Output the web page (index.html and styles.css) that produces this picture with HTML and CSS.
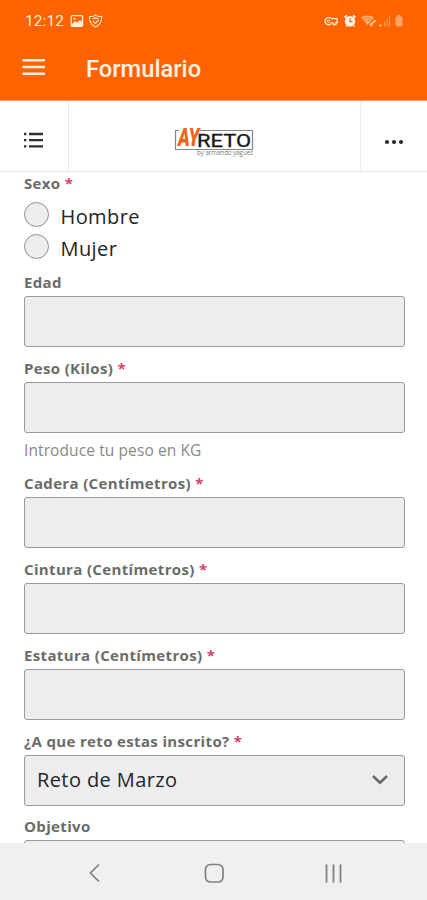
FILE: index.html
```html
<!DOCTYPE html>
<html lang="es">
<head>
<meta charset="utf-8">
<title>Formulario</title>
<link rel="stylesheet" href="styles.css">
</head>
<body>
<div class="screen">
  <header class="header">
    <div class="status">
      <span class="clock">12:12</span>
      <svg class="status-left" width="34" height="16" viewBox="0 0 34 16">
        <rect x="1.2" y="2.7" width="11.4" height="10.6" rx="1.2" fill="none" stroke="#fff0dc" stroke-width="1.3"/>
        <path d="M1.5 11.5 5 8l2 1.500L10 7l3 2.500V13H1.500z" fill="#fff0dc"/><circle cx="4.500" cy="5.700" r="1" fill="#fff0dc"/>
        <path d="M25.500 1.800l1.800 1.500 4.400.5c.2 5-1.600 8-6.200 10.200C20.900 11.800 19.200 8.800 19.400 3.800l4.300-.5z" fill="none" stroke="#ffe3c4" stroke-width="1.100"/>
        <path d="M22.500 5.800q3-1.300 6 0M22.800 8l2.500 2.500 3.400-3.500" fill="none" stroke="#ffe3c4" stroke-width="1.100"/>
      </svg>
      <svg class="status-right" width="82" height="16" viewBox="0 0 82 16">
        <path d="M4.500 4.700a3.500 3.500 0 1 0 3.200 5.100h1.500V11.500h2.800V9.500h1.200V5.700H7.700A3.500 3.500 0 0 0 4.500 4.700z" fill="none" stroke="#ffe8cf" stroke-width="1.300"/>
        <circle cx="4.500" cy="8.200" r="1.200" fill="none" stroke="#ffe8cf"/>
        <path d="M20.500 4.500l2.500-2.200M31.500 4.500l-2.500-2.200M22 13.500l1-1M30.500 13.500l-1-1" stroke="#fff5e5" stroke-width="1.700"/>
        <circle cx="26" cy="8.200" r="5.200" fill="#fff5e5"/><path d="M26 5.200v3.400h2.500" fill="none" stroke="#ff6300" stroke-width="1.200"/>
        <path d="M37 4.500q6.500-4 13 0L43.500 12z" fill="#ffb47c"/><path d="M39 6q4.500-3 9 0M41 8q2.500-2 5 0" fill="none" stroke="#ff6300" stroke-width=".8"/>
        <path d="M46 12l5-4M46 12l2.500.8M52 8l-2.500-.4" stroke="#ffc397" stroke-width="1.700" fill="none"/>
        <rect x="55.500" y="11.500" width="2" height="2" fill="#ffcc91"/><path d="M60.500 13.500V8.500M63 13.500V5.500M65.500 13.500V3" stroke="#ff9850" stroke-width="1.300"/>
        <rect x="71.500" y="3.500" width="7" height="10" rx="1.700" fill="#ffa466"/><rect x="73.500" y="2" width="3" height="2" fill="#ffa466"/>
      </svg>
    </div>
    <div class="titlebar">
      <svg class="menu" width="24" height="18" viewBox="0 0 24 18"><path d="M.5 2.200h22.500M.5 9h22.500M.5 15.800h22.500" stroke="#fff0df" stroke-width="2.500"/></svg>
      <h1 class="title">Formulario</h1>
    </div>
  </header>
  <nav class="toolbar">
    <div class="tool tool-list">
      <svg width="20" height="18" viewBox="0 0 20 18"><path d="M0 3h2.400M5 3h14M0 9.200h2.400M5 9.200h14M0 15.400h2.400M5 15.400h14" stroke="#303030" stroke-width="2.300"/></svg>
    </div>
    <div class="brand">
      <svg width="90" height="40" viewBox="0 0 90 40">
        <path d="M6 9.500H2.500v19H79.500v-19H27" fill="none" stroke="#858585" stroke-width="1.200"/>
        <text class="logo-ay" x="5" y="24.500" textLength="21.500" lengthAdjust="spacingAndGlyphs">AY</text>
        <text class="logo-reto" x="24" y="25.500" textLength="54" lengthAdjust="spacingAndGlyphs">RETO</text>
        <text class="logo-sub" x="24" y="34" textLength="56" lengthAdjust="spacingAndGlyphs">by armando yaguez</text>
      </svg>
    </div>
    <div class="tool tool-more">
      <svg width="20" height="6" viewBox="0 0 20 6"><g fill="#292929"><circle cx="3" cy="3" r="2.100"/><circle cx="10" cy="3" r="2.100"/><circle cx="17" cy="3" r="2.100"/></g></svg>
    </div>
  </nav>
  <main class="form">
    <div class="field field-radios">
      <div class="label">Sexo <span class="req">*</span></div>
      <div class="option"><span class="radio"></span>Hombre</div>
      <div class="option"><span class="radio"></span>Mujer</div>
    </div>
    <div class="field"><div class="label">Edad</div><div class="input"></div></div>
    <div class="field field-hint"><div class="label">Peso (Kilos) <span class="req">*</span></div><div class="input"></div><div class="hint">Introduce tu peso en KG</div></div>
    <div class="field"><div class="label">Cadera (Centímetros) <span class="req">*</span></div><div class="input"></div></div>
    <div class="field"><div class="label">Cintura (Centímetros) <span class="req">*</span></div><div class="input"></div></div>
    <div class="field"><div class="label">Estatura (Centímetros) <span class="req">*</span></div><div class="input"></div></div>
    <div class="field field-select"><div class="label">¿A que reto estas inscrito? <span class="req">*</span></div>
      <div class="input select"><span>Reto de Marzo</span>
        <svg width="18" height="12" viewBox="0 0 18 12"><path d="M2 2 9 8.600l7-6.600" fill="none" stroke="#686868" stroke-width="2.600"/></svg>
      </div>
    </div>
    <div class="field"><div class="label">Objetivo</div><div class="input"></div></div>
  </main>
  <footer class="navbar">
    <svg width="20" height="22" viewBox="0 0 20 22"><path d="M14 2.500 5.500 11l8.500 8.500" fill="none" stroke="#808080" stroke-width="1.700"/></svg>
    <svg width="22" height="22" viewBox="0 0 22 22"><rect x="1.500" y="2.500" width="17.500" height="17.500" rx="5" fill="none" stroke="#808080" stroke-width="1.700"/></svg>
    <svg width="20" height="22" viewBox="0 0 20 22"><path d="M2.500 2.500v18M9.500 2.500v18M16.500 2.500v18" stroke="#808080" stroke-width="1.800"/></svg>
  </footer>
</div>
</body>
</html>
```
FILE: styles.css
```css
* { box-sizing: border-box; }
body { margin: 0; background: #fff; font-family: "Open Sans", "Noto Sans", sans-serif; }
svg { display: block; flex: none; }
.screen { display: flex; flex-direction: column; width: 427px; height: 900px; overflow: hidden; }
.header { flex: none; height: 101px; background: #ff6300; border-bottom: 1px solid #f69a6b; font-family: Roboto, sans-serif; }
.status { display: flex; align-items: center; height: 42px; padding: 0 21px 0 25px; }
.clock { width: 39px; color: #ffeeda; font-size: 15.500px; letter-spacing: .1px; }
.status-left { margin-left: 6px; }
.status-right { margin-left: auto; }
.titlebar { display: flex; align-items: center; height: 50px; padding-left: 22px; }
.title { margin: 3px 0 0 40px; color: #fff3e6; font-size: 23.700px; line-height: 30px; font-weight: 500; }
.toolbar { flex: none; display: flex; height: 71px; border-bottom: 1px solid #e5e5e5; }
.tool { display: flex; align-items: center; }
.tool-list { width: 69px; padding: 7px 0 0 24px; border-right: 1px solid #ebebeb; }
.tool-more { width: 67px; padding: 11px 0 0 23px; border-left: 1px solid #ebebeb; }
.brand { flex: 1; display: flex; align-items: center; padding: 9px 0 0 104px; }
.logo-ay { font: italic 900 25px Roboto, sans-serif; fill: #ed6518; }
.logo-reto { font: 400 18px Roboto, sans-serif; fill: #171717; stroke: #171717; stroke-width: .3px; }
.logo-sub { font: 6.500px "Open Sans", sans-serif; fill: #777; }
.form { flex: 1; min-height: 0; overflow: hidden; padding: 0 22.500px 0 24px; }
.field { height: 86px; }
.field-radios { height: 99px; }
.field-hint { height: 115px; }
.field-select { height: 85px; }
.label { height: 25px; line-height: 23px; color: #6b6b68; font-size: 15px; letter-spacing: .35px; font-weight: 700; white-space: nowrap; }
.req { color: #d93d67; }
.input { height: 51px; border: 1px solid #999; border-radius: 3px; background: #ededed; }
.option { display: flex; align-items: center; height: 32px; padding-top: 6px; gap: 12px; color: #252525; font-size: 20px; letter-spacing: .4px; }
.radio { width: 25px; height: 25px; margin: -3px 0 0 -.5px; border: 1px solid #8f8f8f; border-radius: 50%; background: #ededed; }
.hint { height: 34px; line-height: 34px; color: #888; font-size: 15.500px; letter-spacing: .1px; }
.select { display: flex; align-items: center; justify-content: space-between; padding: 0 15px 2px 12px; color: #252525; font-size: 20px; letter-spacing: .4px; }
.navbar { flex: none; display: flex; align-items: center; justify-content: space-between; height: 57px; padding: 3px 83px 0 85px; background: #f0f0f0; }
```
